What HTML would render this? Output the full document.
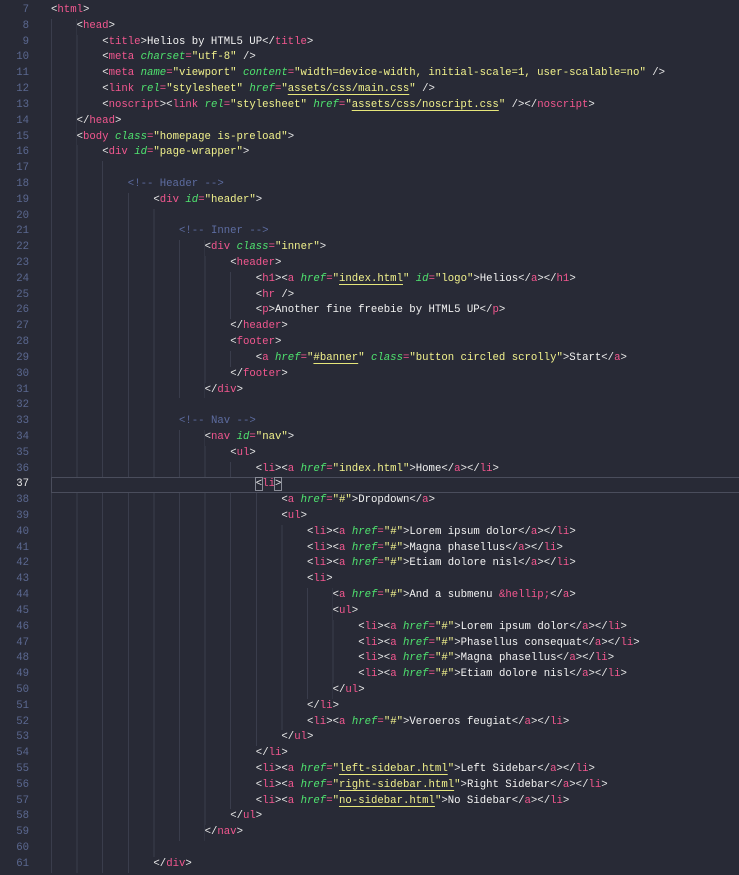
<!DOCTYPE html>
<html><head><meta charset="utf-8"><style>
html,body{margin:0;padding:0;background:#282a36;width:739px;height:875px;overflow:hidden}
body{font-family:"Liberation Mono",monospace;font-size:10.67px;line-height:15.82px;color:#f2f2f2}
#nums{position:absolute;left:0;top:3px;width:29px;text-align:right;color:#5b6890}
#nums div{height:15.82px}
#code{position:absolute;left:51px;top:3px;right:0}
.l{height:15.82px;position:relative;white-space:pre}
i{display:inline-block;vertical-align:top;height:15.82px;background:repeating-linear-gradient(to right,#3a3d4c 0 1px,transparent 1px 25.6px)}
g{color:#f2578f} e{color:#4fe36f;font-style:italic} v{color:#f1f18c} m{color:#5d6ca0} o{color:#e8e8e8}
w{color:#f1f18c;text-decoration:underline;text-decoration-color:#e6e67a;text-underline-offset:3px}
.hl{position:absolute;left:51px;top:477px;width:700px;height:16px;border:1px solid #4a4d5c;box-sizing:border-box}
.cur{outline:1px solid #8a8d98}
</style></head><body>
<div class="hl"></div>
<div id="nums"><div>7</div><div>8</div><div>9</div><div>10</div><div>11</div><div>12</div><div>13</div><div>14</div><div>15</div><div>16</div><div>17</div><div>18</div><div>19</div><div>20</div><div>21</div><div>22</div><div>23</div><div>24</div><div>25</div><div>26</div><div>27</div><div>28</div><div>29</div><div>30</div><div>31</div><div>32</div><div>33</div><div>34</div><div>35</div><div>36</div><div style="color:#e8e8e8">37</div><div>38</div><div>39</div><div>40</div><div>41</div><div>42</div><div>43</div><div>44</div><div>45</div><div>46</div><div>47</div><div>48</div><div>49</div><div>50</div><div>51</div><div>52</div><div>53</div><div>54</div><div>55</div><div>56</div><div>57</div><div>58</div><div>59</div><div>60</div><div>61</div></div>
<div id="code">
<div class="l"><o>&lt;</o><g>html</g><o>&gt;</o></div>
<div class="l"><i style="width:25.6px"></i><o>&lt;</o><g>head</g><o>&gt;</o></div>
<div class="l"><i style="width:51.2px"></i><o>&lt;</o><g>title</g><o>&gt;</o>Helios by HTML5 UP<o>&lt;/</o><g>title</g><o>&gt;</o></div>
<div class="l"><i style="width:51.2px"></i><o>&lt;</o><g>meta</g> <e>charset</e><g>=</g><v>"utf-8"</v> <o>/&gt;</o></div>
<div class="l"><i style="width:51.2px"></i><o>&lt;</o><g>meta</g> <e>name</e><g>=</g><v>"viewport"</v> <e>content</e><g>=</g><v>"width=device-width, initial-scale=1, user-scalable=no"</v> <o>/&gt;</o></div>
<div class="l"><i style="width:51.2px"></i><o>&lt;</o><g>link</g> <e>rel</e><g>=</g><v>"stylesheet"</v> <e>href</e><g>=</g><v>"</v><w>assets/css/main.css</w><v>"</v> <o>/&gt;</o></div>
<div class="l"><i style="width:51.2px"></i><o>&lt;</o><g>noscript</g><o>&gt;&lt;</o><g>link</g> <e>rel</e><g>=</g><v>"stylesheet"</v> <e>href</e><g>=</g><v>"</v><w>assets/css/noscript.css</w><v>"</v> <o>/&gt;&lt;/</o><g>noscript</g><o>&gt;</o></div>
<div class="l"><i style="width:25.6px"></i><o>&lt;/</o><g>head</g><o>&gt;</o></div>
<div class="l"><i style="width:25.6px"></i><o>&lt;</o><g>body</g> <e>class</e><g>=</g><v>"homepage is-preload"</v><o>&gt;</o></div>
<div class="l"><i style="width:51.2px"></i><o>&lt;</o><g>div</g> <e>id</e><g>=</g><v>"page-wrapper"</v><o>&gt;</o></div>
<div class="l"><i style="width:76.8px"></i></div>
<div class="l"><i style="width:76.8px"></i><m>&lt;!-- Header --&gt;</m></div>
<div class="l"><i style="width:102.4px"></i><o>&lt;</o><g>div</g> <e>id</e><g>=</g><v>"header"</v><o>&gt;</o></div>
<div class="l"><i style="width:128px"></i></div>
<div class="l"><i style="width:128px"></i><m>&lt;!-- Inner --&gt;</m></div>
<div class="l"><i style="width:153.6px"></i><o>&lt;</o><g>div</g> <e>class</e><g>=</g><v>"inner"</v><o>&gt;</o></div>
<div class="l"><i style="width:179.2px"></i><o>&lt;</o><g>header</g><o>&gt;</o></div>
<div class="l"><i style="width:204.8px"></i><o>&lt;</o><g>h1</g><o>&gt;&lt;</o><g>a</g> <e>href</e><g>=</g><v>"</v><w>index.html</w><v>"</v> <e>id</e><g>=</g><v>"logo"</v><o>&gt;</o>Helios<o>&lt;/</o><g>a</g><o>&gt;&lt;/</o><g>h1</g><o>&gt;</o></div>
<div class="l"><i style="width:204.8px"></i><o>&lt;</o><g>hr</g> <o>/&gt;</o></div>
<div class="l"><i style="width:204.8px"></i><o>&lt;</o><g>p</g><o>&gt;</o>Another fine freebie by HTML5 UP<o>&lt;/</o><g>p</g><o>&gt;</o></div>
<div class="l"><i style="width:179.2px"></i><o>&lt;/</o><g>header</g><o>&gt;</o></div>
<div class="l"><i style="width:179.2px"></i><o>&lt;</o><g>footer</g><o>&gt;</o></div>
<div class="l"><i style="width:204.8px"></i><o>&lt;</o><g>a</g> <e>href</e><g>=</g><v>"</v><w>#banner</w><v>"</v> <e>class</e><g>=</g><v>"button circled scrolly"</v><o>&gt;</o>Start<o>&lt;/</o><g>a</g><o>&gt;</o></div>
<div class="l"><i style="width:179.2px"></i><o>&lt;/</o><g>footer</g><o>&gt;</o></div>
<div class="l"><i style="width:153.6px"></i><o>&lt;/</o><g>div</g><o>&gt;</o></div>
<div class="l"><i style="width:128px"></i></div>
<div class="l"><i style="width:128px"></i><m>&lt;!-- Nav --&gt;</m></div>
<div class="l"><i style="width:153.6px"></i><o>&lt;</o><g>nav</g> <e>id</e><g>=</g><v>"nav"</v><o>&gt;</o></div>
<div class="l"><i style="width:179.2px"></i><o>&lt;</o><g>ul</g><o>&gt;</o></div>
<div class="l"><i style="width:204.8px"></i><o>&lt;</o><g>li</g><o>&gt;&lt;</o><g>a</g> <e>href</e><g>=</g><v>"index.html"</v><o>&gt;</o>Home<o>&lt;/</o><g>a</g><o>&gt;&lt;/</o><g>li</g><o>&gt;</o></div>
<div class="l"><i style="width:204.8px;background:none"></i><o class="cur">&lt;</o><g>li</g><o class="cur">&gt;</o></div>
<div class="l"><i style="width:230.4px"></i><o>&lt;</o><g>a</g> <e>href</e><g>=</g><v>"#"</v><o>&gt;</o>Dropdown<o>&lt;/</o><g>a</g><o>&gt;</o></div>
<div class="l"><i style="width:230.4px"></i><o>&lt;</o><g>ul</g><o>&gt;</o></div>
<div class="l"><i style="width:256px"></i><o>&lt;</o><g>li</g><o>&gt;&lt;</o><g>a</g> <e>href</e><g>=</g><v>"#"</v><o>&gt;</o>Lorem ipsum dolor<o>&lt;/</o><g>a</g><o>&gt;&lt;/</o><g>li</g><o>&gt;</o></div>
<div class="l"><i style="width:256px"></i><o>&lt;</o><g>li</g><o>&gt;&lt;</o><g>a</g> <e>href</e><g>=</g><v>"#"</v><o>&gt;</o>Magna phasellus<o>&lt;/</o><g>a</g><o>&gt;&lt;/</o><g>li</g><o>&gt;</o></div>
<div class="l"><i style="width:256px"></i><o>&lt;</o><g>li</g><o>&gt;&lt;</o><g>a</g> <e>href</e><g>=</g><v>"#"</v><o>&gt;</o>Etiam dolore nisl<o>&lt;/</o><g>a</g><o>&gt;&lt;/</o><g>li</g><o>&gt;</o></div>
<div class="l"><i style="width:256px"></i><o>&lt;</o><g>li</g><o>&gt;</o></div>
<div class="l"><i style="width:281.6px"></i><o>&lt;</o><g>a</g> <e>href</e><g>=</g><v>"#"</v><o>&gt;</o>And a submenu <g>&amp;hellip;</g><o>&lt;/</o><g>a</g><o>&gt;</o></div>
<div class="l"><i style="width:281.6px"></i><o>&lt;</o><g>ul</g><o>&gt;</o></div>
<div class="l"><i style="width:307.2px"></i><o>&lt;</o><g>li</g><o>&gt;&lt;</o><g>a</g> <e>href</e><g>=</g><v>"#"</v><o>&gt;</o>Lorem ipsum dolor<o>&lt;/</o><g>a</g><o>&gt;&lt;/</o><g>li</g><o>&gt;</o></div>
<div class="l"><i style="width:307.2px"></i><o>&lt;</o><g>li</g><o>&gt;&lt;</o><g>a</g> <e>href</e><g>=</g><v>"#"</v><o>&gt;</o>Phasellus consequat<o>&lt;/</o><g>a</g><o>&gt;&lt;/</o><g>li</g><o>&gt;</o></div>
<div class="l"><i style="width:307.2px"></i><o>&lt;</o><g>li</g><o>&gt;&lt;</o><g>a</g> <e>href</e><g>=</g><v>"#"</v><o>&gt;</o>Magna phasellus<o>&lt;/</o><g>a</g><o>&gt;&lt;/</o><g>li</g><o>&gt;</o></div>
<div class="l"><i style="width:307.2px"></i><o>&lt;</o><g>li</g><o>&gt;&lt;</o><g>a</g> <e>href</e><g>=</g><v>"#"</v><o>&gt;</o>Etiam dolore nisl<o>&lt;/</o><g>a</g><o>&gt;&lt;/</o><g>li</g><o>&gt;</o></div>
<div class="l"><i style="width:281.6px"></i><o>&lt;/</o><g>ul</g><o>&gt;</o></div>
<div class="l"><i style="width:256px"></i><o>&lt;/</o><g>li</g><o>&gt;</o></div>
<div class="l"><i style="width:256px"></i><o>&lt;</o><g>li</g><o>&gt;&lt;</o><g>a</g> <e>href</e><g>=</g><v>"#"</v><o>&gt;</o>Veroeros feugiat<o>&lt;/</o><g>a</g><o>&gt;&lt;/</o><g>li</g><o>&gt;</o></div>
<div class="l"><i style="width:230.4px"></i><o>&lt;/</o><g>ul</g><o>&gt;</o></div>
<div class="l"><i style="width:204.8px"></i><o>&lt;/</o><g>li</g><o>&gt;</o></div>
<div class="l"><i style="width:204.8px"></i><o>&lt;</o><g>li</g><o>&gt;&lt;</o><g>a</g> <e>href</e><g>=</g><v>"</v><w>left-sidebar.html</w><v>"</v><o>&gt;</o>Left Sidebar<o>&lt;/</o><g>a</g><o>&gt;&lt;/</o><g>li</g><o>&gt;</o></div>
<div class="l"><i style="width:204.8px"></i><o>&lt;</o><g>li</g><o>&gt;&lt;</o><g>a</g> <e>href</e><g>=</g><v>"</v><w>right-sidebar.html</w><v>"</v><o>&gt;</o>Right Sidebar<o>&lt;/</o><g>a</g><o>&gt;&lt;/</o><g>li</g><o>&gt;</o></div>
<div class="l"><i style="width:204.8px"></i><o>&lt;</o><g>li</g><o>&gt;&lt;</o><g>a</g> <e>href</e><g>=</g><v>"</v><w>no-sidebar.html</w><v>"</v><o>&gt;</o>No Sidebar<o>&lt;/</o><g>a</g><o>&gt;&lt;/</o><g>li</g><o>&gt;</o></div>
<div class="l"><i style="width:179.2px"></i><o>&lt;/</o><g>ul</g><o>&gt;</o></div>
<div class="l"><i style="width:153.6px"></i><o>&lt;/</o><g>nav</g><o>&gt;</o></div>
<div class="l"><i style="width:128px"></i></div>
<div class="l"><i style="width:102.4px"></i><o>&lt;/</o><g>div</g><o>&gt;</o></div>
</div>
</body></html>
